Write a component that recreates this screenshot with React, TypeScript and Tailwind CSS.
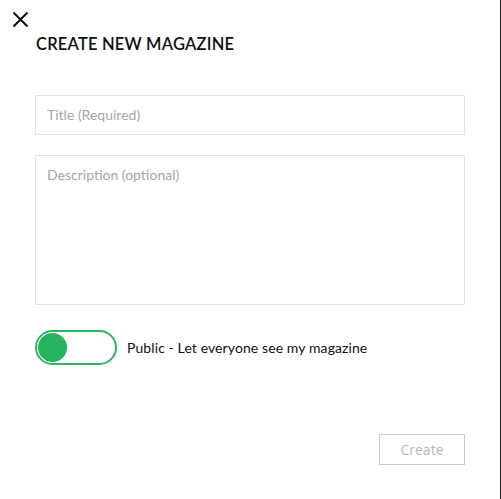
import React, { useState } from 'react';

const App: React.FC = () => {
  const [isPublic, setIsPublic] = useState(true);

  return (
    <div className="w-[501px] h-[499px] flex bg-white font-['Lato','Liberation_Sans',sans-serif]">
      <div className="flex-1 flex flex-col pl-[35px] pr-[35px] pt-[11px] relative">
        {/* Close */}
        <button className="absolute left-[12px] top-[11px] w-[17px] h-[17px] text-black">
          <svg viewBox="0 0 17 17" className="w-[17px] h-[17px]" fill="none" stroke="currentColor" strokeWidth="1.8">
            <path d="M1.5 1.5 L15.5 15.5 M15.5 1.5 L1.5 15.5" />
          </svg>
        </button>

        <h1 className="mt-[23px] ml-[1px] text-[16.5px] leading-[20px] font-semibold text-[#111] tracking-[0.2px]">
          CREATE NEW MAGAZINE
        </h1>

        <input
          className="mt-[41px] h-[40px] w-[430px] border border-[#e3e3e3] px-[11px] pb-[1px] text-[14px] text-[#333] placeholder:text-[#a5a5a5] outline-none"
          placeholder="Title (Required)"
        />

        <textarea
          className="mt-[20px] h-[150px] w-[430px] border border-[#e3e3e3] px-[11px] pt-[10px] pb-[11px] text-[14px] leading-[18px] text-[#333] placeholder:text-[#a5a5a5] outline-none resize-none"
          placeholder="Description (optional)"
        />

        <div className="mt-[25px] flex items-center gap-[10px]">
          <button
            onClick={() => setIsPublic(!isPublic)}
            className={`w-[82px] h-[35px] rounded-full border-2 border-[#2eb665] flex items-center px-[1px] ${
              isPublic ? 'justify-start' : 'justify-end'
            }`}
          >
            <span className="w-[29px] h-[29px] rounded-full bg-[#27b35f]" />
          </button>
          <span className="text-[14px] text-[#111] tracking-[0.1px]">Public - Let everyone see my magazine</span>
        </div>

        <div className="mt-[69px] flex justify-end">
          <button className="w-[86px] h-[31px] border border-[#c8c8c8] text-[14px] text-[#b8b8b8] font-['Open_Sans','Liberation_Sans',sans-serif]">
            Create
          </button>
        </div>
      </div>
      <div className="w-[1px] h-full bg-[#222]" />
    </div>
  );
};

export default App;
